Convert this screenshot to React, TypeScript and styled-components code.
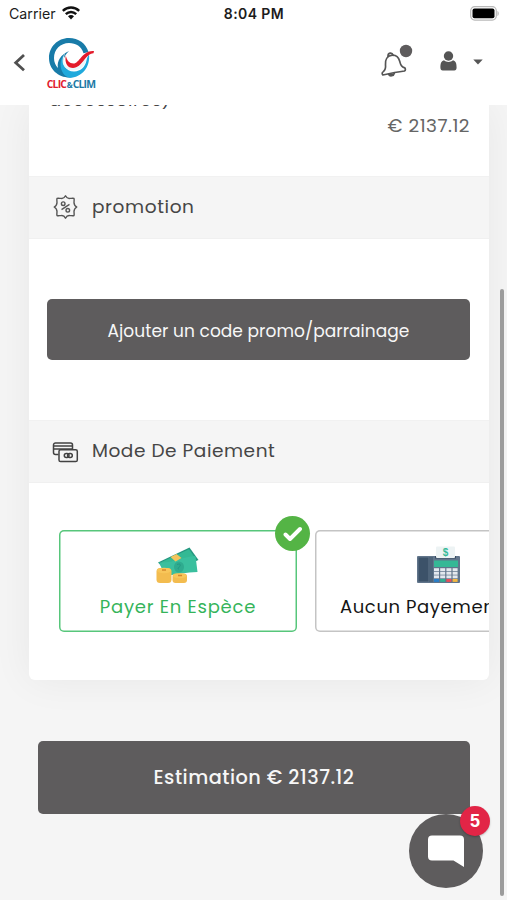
import React from "react";
import styled, { createGlobalStyle } from "styled-components";

const GlobalStyle = createGlobalStyle`
  *, *::before, *::after { box-sizing: border-box; }
  html, body { margin: 0; padding: 0; }
  body { background: #f5f5f5; overflow: hidden; }
  svg { display: block; flex: none; }
  button { border: 0; padding: 0; background: none; }
`;

const Screen = styled.div`
  position: relative;
  width: 507px;
  height: 900px;
  overflow: hidden;
  display: flex;
  flex-direction: column;
  background: #f5f5f5;
  color: #464646;
  font-family: Poppins, Inter, sans-serif;
`;

const StatusBar = styled.div`
  flex: none;
  height: 28px;
  padding: 0 8px 0 9px;
  display: grid;
  grid-template-columns: 1fr auto 1fr;
  align-items: center;
  background: #fff;
  color: #1c1c1c;
  font-family: Inter, sans-serif;
  font-size: 14.2px;
  z-index: 1;
`;

const Carrier = styled.div`
  display: flex;
  align-items: center;
  gap: 6px;
  padding-bottom: 2px;
`;

const Clock = styled.div`
  padding-bottom: 2px;
  font-weight: 600;
  font-size: 14px;
  letter-spacing: 0.4px;
`;

const Battery = styled.div`
  justify-self: end;
  padding-bottom: 2px;
`;

const NavBar = styled.header`
  flex: none;
  height: 77px;
  padding: 0 24px 0 13px;
  display: flex;
  align-items: flex-start;
  background: #fff;
  z-index: 1;
`;

const BackButton = styled.button`
  margin: 25px 19px 0 0;
`;

const Logo = styled.div`
  margin-top: 9px;
  width: 52px;
  display: flex;
  flex-direction: column;
  align-items: center;
`;

const LogoName = styled.div`
  height: 11px;
  font: 700 10.4px/11px "Open Sans", sans-serif;
  letter-spacing: -0.8px;
  word-spacing: -1.2px;
  white-space: nowrap;
  color: #2079a5;
`;

const LogoRed = styled.span`
  color: #e1202d;
`;

const LogoAmp = styled.span`
  font-size: 8px;
`;

const NavActions = styled.div`
  margin-left: auto;
  display: flex;
  align-items: flex-start;
`;

const Content = styled.main`
  flex: 1;
  min-height: 0;
  padding: 0 18px 0 29px;
`;

const Card = styled.section`
  width: 460px;
  border-radius: 0 0 6px 6px;
  background: #fff;
  box-shadow: 0 0 42px rgba(0, 0, 0, 0.06);
`;

const Summary = styled.div`
  height: 71px;
  padding: 0 19px 0 20px;
  display: flex;
  flex-direction: column;
`;

const ItemName = styled.div`
  margin-top: -15px;
  height: 20px;
  line-height: 20px;
  font-size: 18px;
  letter-spacing: 0.5px;
`;

const Price = styled.div`
  align-self: flex-end;
  margin-top: 6px;
  line-height: 20px;
  font-size: 18.5px;
  letter-spacing: 0.5px;
  color: #666;
`;

const SectionHeader = styled.div`
  height: 63px;
  padding: 0 0 2px 23px;
  display: flex;
  align-items: center;
  gap: 13px;
  background: #f5f5f5;
  border-top: 1px solid #f1f1f1;
  border-bottom: 1px solid #f0f0f0;
`;

const SectionTitle = styled.h2<{ $spacing: number }>`
  margin: 0;
  font-size: 18.5px;
  font-weight: 400;
  line-height: 26px;
  letter-spacing: ${(p) => p.$spacing}px;
`;

const PromoBody = styled.div`
  height: 181px;
  padding: 60px 19px 0 18px;
`;

const SolidButton = styled.button<{ $height: number }>`
  display: block;
  width: 100%;
  height: ${(p) => p.$height}px;
  border-radius: 5px;
  background: #5e5c5d;
  color: #f7f7f7;
  font-family: inherit;
`;

const PromoButton = styled(SolidButton)`
  padding-top: 2px;
  font-size: 17px;
  letter-spacing: 0.06px;
`;

const Options = styled.div`
  height: 197px;
  padding: 47px 0 0 30px;
  display: flex;
  align-items: flex-start;
  gap: 18px;
  overflow: hidden;
`;

const Option = styled.div<{ $selected?: boolean; $width: number }>`
  position: relative;
  flex: none;
  width: ${(p) => p.$width}px;
  height: 102px;
  padding-top: 16px;
  display: flex;
  flex-direction: column;
  align-items: center;
  box-shadow: inset 0 0 0 1.5px ${(p) => (p.$selected ? "#57c67b" : "#c4c4c4")};
  border-radius: 5px;
  color: ${(p) => (p.$selected ? "#35b45a" : "#151515")};
`;

const OptionLabel = styled.div<{ $inset?: number; $spacing: number }>`
  margin-top: 11px;
  padding-left: ${(p) => p.$inset ?? 0}px;
  align-self: ${(p) => (p.$inset ? "flex-start" : "center")};
  font-size: 18px;
  line-height: 24px;
  letter-spacing: ${(p) => p.$spacing}px;
  white-space: nowrap;
`;

const CheckBadge = styled.div`
  position: absolute;
  top: -14px;
  right: -13px;
  width: 35px;
  height: 35px;
  display: grid;
  place-items: center;
  border-radius: 50%;
  background: #54b445;
`;

const Footer = styled.div`
  width: 432px;
  margin: 61px 0 0 9px;
`;

const EstimateButton = styled(SolidButton)`
  font-size: 19.3px;
  font-weight: 500;
  letter-spacing: 0.5px;
`;

const ChatBubble = styled.button`
  position: absolute;
  left: 409px;
  top: 814px;
  width: 74px;
  height: 74px;
  border-radius: 50%;
  background: #5e5c5d;
`;

const ChatCount = styled.span`
  position: absolute;
  left: 51px;
  top: -8px;
  width: 30px;
  height: 30px;
  border-radius: 50%;
  background: #e22546;
  color: #fff;
  font: 700 18px/30px "Liberation Sans", sans-serif;
  text-align: center;
  box-shadow: 0 1px 2px rgba(0, 0, 0, 0.25);
`;

const ScrollThumb = styled.div`
  position: absolute;
  right: 3px;
  top: 289px;
  width: 4px;
  height: 607px;
  border-radius: 2px;
  background: #9c9c9c;
`;

const WifiIcon = () => (
  <svg width="18" height="14" viewBox="0 0 18 14" fill="none" stroke="#111" strokeWidth="2.4">
    <path d="M.8 4.9C5.5.4 12.5.4 17.2 4.9" />
    <path d="M3.8 8.1c3-2.9 7.4-2.9 10.4 0" />
    <path d="M6 10.3c1.8-1.6 4.2-1.6 6 0L9 13.6z" fill="#111" stroke="none" />
  </svg>
);

const BatteryIcon = () => (
  <svg width="30" height="15" viewBox="0 0 30 15">
    <rect x="1.700" y=".7" width="25.6" height="13.4" rx="4" fill="#fff" stroke="#b9b9b9" strokeWidth="1.2" />
    <rect x="3.500" y="2.5" width="22" height="9.8" rx="2" fill="#000" />
    <path d="M28.500 5v5c1.6-.6 1.6-4.4 0-5z" fill="#b0b0b0" />
  </svg>
);

const BackIcon = () => (
  <svg width="13" height="19" viewBox="0 0 13 19" fill="none" stroke="#505050" strokeWidth="2.8">
    <path d="M11 2 2.7 9.7 11 17.3" />
  </svg>
);

const LogoMark = () => (
  <svg width="46" height="42" viewBox="0 0 46 42">
    <path
      d="M21.500 40.500C10 40.500 1 32 1 21 1 10 9.500 1 21 1c9.500 0 17 5.500 19.500 14l-5 1.200C33.500 9.500 28 6 21 6 12.500 6 6 12.500 6 21c0 4 1.500 7.500 4 10-1.500-7 3-13.500 11-17-5.500 5-7.500 12-4 18.500 1.500 3 3 5.500 6.500 8z"
      fill="#187ba8"
    />
    <path d="M15.500 18c-3 9 3 17 11 16.500 6-.5 10.500-4 12-11 .5-3 1.200-4 2.500-6 1.500 12-7 23.300-19.500 23.300-8-2-12-14-6-22.800z" fill="#20a9dc" />
    <path d="M17 16c-3.500 10 1.500 15 8 15 6 0 9-4 12-9l1 1.500c-2 6-6 9.500-12 9.800C16 34 11.500 25 17 16z" fill="#e9f7fc" />
    <path d="M17.800 18.500c-1.500 8 2 12.500 7.200 12.500 9.500 0 12-14.500 20.500-14.700l.5-2.300c-11.500-1.200-14.500 12.500-20.500 12.500-4 0-6.700-3-7.700-8z" fill="#e31b2b" />
  </svg>
);

const BellIcon = () => (
  <svg width="33" height="34" viewBox="0 0 33 34">
    <g fill="none" stroke="#555" strokeWidth="1.700" strokeLinejoin="round" strokeLinecap="round">
      <path d="M1.800 31c-1-1.200-.8-2.600.5-3.400 2.300-1.600 2.500-4 2.200-7.100-.4-4.700 1.800-8.600 5.800-9.200 4.200-.6 7.200 1.800 8.400 6 .9 3.300 1.200 5.500 4.500 6.300 1.500.5 1.600 2.600.3 3.400-7.200.9-14.200 2.300-21.700 4z" />
      <path d="M7 12.500c-.2-4 4-4.600 5.200-1.200" />
      <path d="M7.700 30.300c1 2.300 5 1.900 5.600-1" fill="#555" />
    </g>
    <circle cx="25" cy="7" r="6.200" fill="#5e5c5d" />
  </svg>
);

const UserIcon = () => (
  <svg width="17" height="20" viewBox="0 0 17 20" fill="#555">
    <circle cx="8.500" cy="5" r="4.700" />
    <path d="M4 9.200c2.300 2.300 6.700 2.300 9 0 3 .8 3.600 3.500 3.600 7.300 0 2-.8 3-2.300 3H2.700c-1.500 0-2.300-1-2.300-3C.4 12.700 1 10 4 9.200z" />
  </svg>
);

const CaretIcon = () => (
  <svg width="10" height="6" viewBox="0 0 10 6" fill="#555">
    <path d="M.3.5h9.400L5 5.500z" />
  </svg>
);

const ActionUser = styled.div`
  margin: 23px 16px 0 26px;
`;
const ActionCaret = styled.div`
  margin-top: 31px;
`;
const ActionBell = styled.div`
  margin-top: 16px;
`;

const PercentIcon = () => (
  <svg width="27" height="26" viewBox="0 0 27 26" fill="none" stroke="#555" strokeWidth="1.400">
    <path d="M13.500 1.800c1 2 2.500 3 4.500 2.600 1 0 3-.4 4 0 .4 1 0 3 0 4 0 2 1 3.500 2.800 4.600-1.800 1.100-2.800 2.600-2.800 4.600 0 1 .4 3 0 4-1 .4-3 0-4 0-2-.4-3.500.6-4.500 2.600-1-2-2.500-3-4.500-2.600-1 0-3 .4-4 0-.4-1 0-3 0-4 0-2-1-3.500-2.800-4.600C4 11.900 5 10.400 5 8.400c0-1-.4-3 0-4 1-.4 3 0 4 0 2 .4 3.500-.6 4.500-2.600z" strokeLinejoin="round" />
    <circle cx="11.200" cy="9.700" r="1.800" />
    <circle cx="15.800" cy="16.300" r="1.800" />
    <path d="m9.500 15.700 8-5.400" />
  </svg>
);

const CardsIcon = () => (
  <svg width="27" height="22" viewBox="0 0 27 22" fill="none" stroke="#424242" strokeWidth="1.500">
    <path d="M6.500 13.500H3.500a2 2 0 0 1-2-2V4a2 2 0 0 1 2-2h15a2 2 0 0 1 2 2v4M1.500 5h19M1.500 8h19" />
    <rect x="7" y="8.700" width="18.300" height="11.800" rx="1.600" fill="#f5f5f5" />
    <rect x="12.300" y="12.600" width="4.700" height="4" rx="2" />
    <rect x="15.600" y="12.600" width="4.700" height="4" rx="2" />
  </svg>
);

const CardsSlot = styled.div`
  padding-top: 3px;
`;

const CashIcon = () => (
  <svg width="44" height="38" viewBox="0 0 44 38">
    <path d="m2 16.500 31.500-15L42.500 14 12 27z" fill="#259780" />
    <path d="m5 16.300 28-13 6.500 9.200-26 11z" fill="#34b994" />
    <path d="M3 16.500c13 1 24-6 36.500-6.500l2 16C30 26 22 29 9 29.500z" fill="#3abf9e" />
    <path d="m14.500 11 6-3 5 4-6 3.500z" fill="#f4c45b" />
    <ellipse cx="23" cy="21" rx="5" ry="5.500" fill="#2fab8f" />
    <path d="M21 18.500c3-1 4 0 3 1.500s-3 2.500-1 3.500" fill="none" stroke="#249a83" />
    <rect x=".5" y="22" width="15" height="15" rx="3.500" fill="#f3bc4f" />
    <ellipse cx="8" cy="24.500" rx="7" ry="2.700" fill="#f8c65a" />
    <path d="M6 24h4" stroke="#d5882f" strokeWidth="1.500" />
    <rect x="16.500" y="27.500" width="14.500" height="9.500" rx="3" fill="#f3bc4f" />
    <ellipse cx="23.700" cy="29.800" rx="6.700" ry="2.500" fill="#f8c65a" />
    <path d="M22 29.500h4" stroke="#d5882f" strokeWidth="1.500" />
  </svg>
);

const KEY_ROWS = [
  ["#e3e8ee", "#e3e8ee", "#e3e8ee", "#e3e8ee"],
  ["#e3e8ee", "#e3e8ee", "#e3e8ee", "#e3e8ee"],
  ["#e3e8ee", "#e3e8ee", "#e3e8ee", "#e3e8ee"],
  ["#287ec8", "#30af91", "#e94e57", "#f4b83f"],
];

const TerminalIcon = () => (
  <svg width="45" height="38" viewBox="0 0 45 38">
    <rect x="1" y="10" width="43" height="27" rx="1" fill="#61758b" />
    <rect x="2.500" y="11.500" width="10" height="24" fill="#3c5269" />
    <path d="M13 11h4v25h-4z" fill="#4e647a" />
    <path d="M19 10h21v2.500H19z" fill="#384c61" />
    <rect x="20" y=".5" width="19" height="11.500" rx="1" fill="#edf3f4" />
    <text x="29.500" y="9.700" textAnchor="middle" fontFamily="Liberation Sans" fontSize="10" fontWeight="700" fill="#36ba98">$</text>
    <rect x="18" y="14.500" width="24" height="6.500" fill="#35b896" />
    {KEY_ROWS.map((keys, row) =>
      keys.map((fill, col) => (
        <rect key={`${row}-${col}`} x={18 + col * 6.2} y={22.2 + row * 3.6} width="5" height="2.900" fill={fill} />
      ))
    )}
  </svg>
);

const CheckIcon = () => (
  <svg width="20" height="16" viewBox="0 0 20 16" fill="none" stroke="#fff" strokeWidth="3.900" strokeLinecap="round" strokeLinejoin="round">
    <path d="m2.500 8.500 4.500 4.500L17 3" />
  </svg>
);

const ChatIcon = () => (
  <svg width="74" height="74" viewBox="0 0 74 74">
    <path d="M23 21.500h28a4 4 0 0 1 4 4V53l-10.500-6.500H23a4 4 0 0 1-4-4v-17a4 4 0 0 1 4-4z" fill="#fff" />
  </svg>
);

export default function App() {
  return (
    <>
      <GlobalStyle />
      <Screen>
        <StatusBar>
          <Carrier>Carrier <WifiIcon /></Carrier>
          <Clock>8:04 PM</Clock>
          <Battery><BatteryIcon /></Battery>
        </StatusBar>
        <NavBar>
          <BackButton aria-label="Retour"><BackIcon /></BackButton>
          <Logo>
            <LogoMark />
            <LogoName><LogoRed>CLIC</LogoRed> <LogoAmp>&amp;</LogoAmp> CLIM</LogoName>
          </Logo>
          <NavActions>
            <ActionBell><BellIcon /></ActionBell>
            <ActionUser><UserIcon /></ActionUser>
            <ActionCaret><CaretIcon /></ActionCaret>
          </NavActions>
        </NavBar>
        <Content>
          <Card>
            <Summary>
              <ItemName>accessoires)</ItemName>
              <Price>€ 2137.12</Price>
            </Summary>
            <SectionHeader>
              <PercentIcon />
              <SectionTitle $spacing={0.6}>promotion</SectionTitle>
            </SectionHeader>
            <PromoBody>
              <PromoButton $height={61}>Ajouter un code promo/parrainage</PromoButton>
            </PromoBody>
            <SectionHeader>
              <CardsSlot><CardsIcon /></CardsSlot>
              <SectionTitle $spacing={0.55}>Mode De Paiement</SectionTitle>
            </SectionHeader>
            <Options>
              <Option $selected $width={238}>
                <CashIcon />
                <OptionLabel $spacing={0.75}>Payer En Espèce</OptionLabel>
                <CheckBadge><CheckIcon /></CheckBadge>
              </Option>
              <Option $width={246}>
                <TerminalIcon />
                <OptionLabel $inset={25} $spacing={0.6}>Aucun Payement</OptionLabel>
              </Option>
            </Options>
          </Card>
          <Footer>
            <EstimateButton $height={73}>Estimation € 2137.12</EstimateButton>
          </Footer>
        </Content>
        <ChatBubble aria-label="Messages">
          <ChatIcon />
          <ChatCount>5</ChatCount>
        </ChatBubble>
        <ScrollThumb />
      </Screen>
    </>
  );
}
